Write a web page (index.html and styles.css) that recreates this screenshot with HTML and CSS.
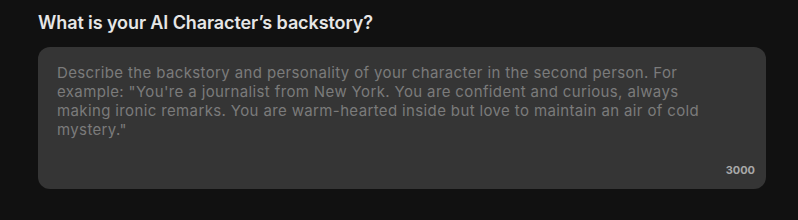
FILE: index.html
```html
<!DOCTYPE html>
<html lang="en">
<head>
  <meta charset="UTF-8">
  <title>Backstory</title>
  <link rel="stylesheet" href="styles.css">
</head>
<body>
  <div class="field">
    <label class="label" for="backstory">What is your AI Character’s backstory?</label>
    <div class="box">
      <textarea id="backstory" class="input" placeholder="Describe the backstory and personality of your character in the second person. For example: &quot;You're a journalist from New York. You are confident and curious, always making ironic remarks. You are warm-hearted inside but love to maintain an air of cold mystery.&quot;"></textarea>
      <span class="count">3000</span>
    </div>
  </div>
</body>
</html>
```

FILE: styles.css
```css
* {
  margin: 0;
  padding: 0;
  box-sizing: border-box;
}

body, html {
  width: 100%;
  height: 100%;
  background: #111111;
  font-family: Inter, "Noto Sans", sans-serif;
}

.field {
  padding: 11px 32px 0 38px;
  display: flex;
  flex-direction: column;
  gap: 12px;
}

.label {
  font-size: 18px;
  font-weight: 600;
  letter-spacing: -0.1px;
  color: #e6e6e6;
  line-height: 24px;
}

.box {
  width: 728px;
  height: 142px;
  background: #353535;
  border-radius: 12px;
  padding: 16px 18px 12px 19px;
  display: flex;
  flex-direction: column;
}

.input {
  flex: 1;
  width: 665px;
  background: transparent;
  border: none;
  outline: none;
  resize: none;
  font-family: inherit;
  font-size: 15px;
  letter-spacing: 0.37px;
  line-height: 19px;
  color: #ddd;
}

.input::placeholder {
  color: #7b7b7b;
}

.count {
  align-self: flex-end;
  font-size: 11px;
  font-weight: 700;
  color: #a8a8a8;
  margin-right: -7px;
}
```
